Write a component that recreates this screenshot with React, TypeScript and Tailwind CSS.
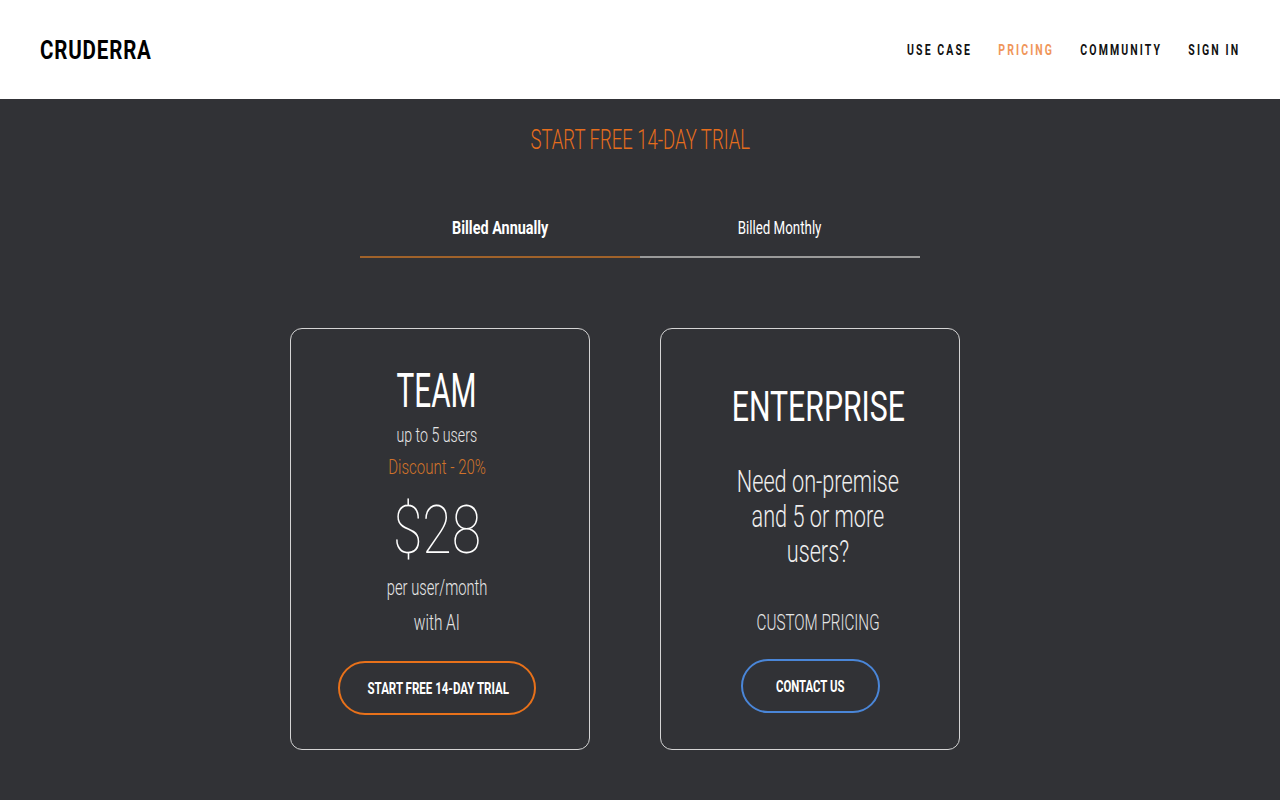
import React, { useState } from 'react'

// Oswald isn't available, so Roboto is squeezed horizontally to get the condensed look
const font = { fontFamily: 'Roboto, "Liberation Sans", sans-serif' }

export default function App() {
  const [billing, setBilling] = useState<'annual' | 'monthly'>('annual')

  return (
    <div className="min-h-[800px] bg-[#313236]" style={font}>
      <header className="h-[99px] bg-white flex items-center justify-between px-10">
        <div className="text-[26px] leading-[32px] font-bold tracking-[0.04em] text-black scale-x-[0.79] origin-left">
          CRUDERRA
        </div>
        <nav className="mt-[2px] flex items-center gap-[35px] text-[14px] font-bold tracking-[0.2em] scale-x-[0.75] origin-right">
          <a className="text-[#111]">USE CASE</a>
          <a className="text-[#f0965a]">PRICING</a>
          <a className="text-[#111]">COMMUNITY</a>
          <a className="text-[#111]">SIGN IN</a>
        </nav>
      </header>

      <main className="flex flex-col items-center">
        <h2 className="mt-[24px] text-[28px] leading-[34px] font-light text-[#e66d1c] scale-x-[0.66] whitespace-nowrap">
          START FREE 14-DAY TRIAL
        </h2>

        <div className="mt-[59px] flex w-[560px]">
          <button
            className={`flex-1 pb-[15px] text-white border-b-2 ${
              billing === 'annual' ? 'border-[#a0622a]' : 'border-[#9a9a9a]'
            }`}
            onClick={() => setBilling('annual')}
          >
            <span
              className={`inline-block text-[18px] leading-[24px] ${
                billing === 'annual' ? 'font-bold scale-x-[0.8]' : 'font-normal scale-x-[0.74]'
              }`}
            >
              Billed Annually
            </span>
          </button>
          <button
            className={`flex-1 pb-[15px] text-white border-b-2 ${
              billing === 'monthly' ? 'border-[#a0622a]' : 'border-[#9a9a9a]'
            }`}
            onClick={() => setBilling('monthly')}
          >
            <span
              className={`inline-block text-[18px] leading-[24px] ${
                billing === 'monthly' ? 'font-bold scale-x-[0.8]' : 'font-normal scale-x-[0.74]'
              }`}
            >
              Billed Monthly
            </span>
          </button>
        </div>

        <div className="mt-[70px] mr-[30px] flex gap-[70px]">
          {/* team plan */}
          <div className="w-[300px] h-[422px] border border-[#d4d4d4] rounded-[12px] flex flex-col items-center text-white pr-[6px]">
            <div className="mt-[38px] text-[48px] leading-[48px] scale-x-[0.62]">TEAM</div>
            <div className="mt-[6px] text-[20px] leading-[28px] font-light text-[#e6e6e6] scale-x-[0.71] whitespace-nowrap">
              up to 5 users
            </div>
            <div className="mt-[4px] text-[20px] leading-[28px] font-light text-[#d0722a] scale-x-[0.75] whitespace-nowrap">
              Discount - 20%
            </div>
            <div className="mt-[17px] text-[67px] leading-[64px] font-thin scale-x-[0.8]">
              ${billing === 'annual' ? '28' : '35'}
            </div>
            <div className="mt-[11px] text-[22px] leading-[30px] font-light text-[#e6e6e6] scale-x-[0.67] whitespace-nowrap">
              per user/month
            </div>
            <div className="mt-[5px] text-[22px] leading-[30px] font-light text-[#e6e6e6] scale-x-[0.7]">
              with AI
            </div>
            <button className="mt-[23px] w-[198px] h-[54px] rounded-full border-2 border-[#e8711a] text-white">
              <span className="inline-block mt-[2px] text-[16px] font-bold scale-x-[0.72] whitespace-nowrap">
                START FREE 14-DAY TRIAL
              </span>
            </button>
          </div>

          {/* enterprise plan */}
          <div className="w-[300px] h-[422px] border border-[#d4d4d4] rounded-[12px] flex flex-col items-center text-white">
            <div className="w-full pl-[16px] flex flex-col items-center">
              <div className="mt-[53px] text-[42px] leading-[50px] scale-x-[0.72]">ENTERPRISE</div>
              <div className="mt-[32px] text-[31px] leading-[35px] font-light text-center text-[#eeeeee] scale-x-[0.7] whitespace-nowrap">
                Need on-premise
                <br />
                and 5 or more
                <br />
                users?
              </div>
              <div className="mt-[39px] text-[22px] leading-[30px] font-light text-[#e6e6e6] scale-x-[0.69] whitespace-nowrap">
                CUSTOM PRICING
              </div>
            </div>
            <button className="mt-[21px] w-[139px] h-[54px] rounded-full border-2 border-[#4a86d8] text-white">
              <span className="inline-block mt-[2px] text-[16px] font-bold scale-x-[0.71] whitespace-nowrap">
                CONTACT US
              </span>
            </button>
          </div>
        </div>
      </main>
    </div>
  )
}
